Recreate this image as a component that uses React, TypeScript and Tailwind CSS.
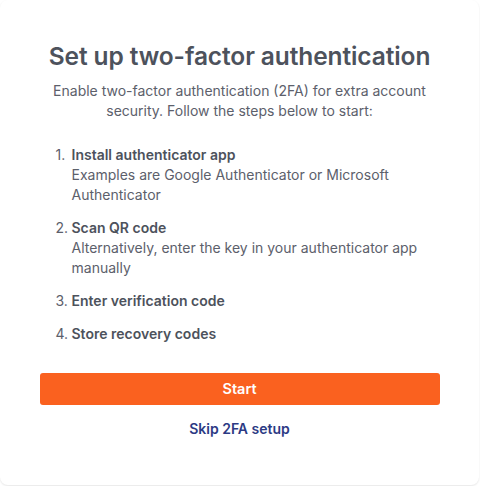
import React from "react";

const steps = [
  {
    title: "Install authenticator app",
    desc: "Examples are Google Authenticator or Microsoft Authenticator",
  },
  {
    title: "Scan QR code",
    desc: "Alternatively, enter the key in your authenticator app manually",
  },
  { title: "Enter verification code" },
  { title: "Store recovery codes" },
];

export default function App() {
  return (
    <div className="w-[480px] h-[486px] bg-white" style={{ fontFamily: "Inter, 'Noto Sans', sans-serif" }}>
      <div className="w-[479px] h-[485px] rounded-lg bg-white shadow-[0_1px_2px_rgba(0,0,0,0.1)] flex flex-col items-center pt-[39px]">
        <h1 className="text-[24.5px] leading-[34px] font-semibold text-[#4d525c] tracking-[-0.1px]">
          Set up two-factor authentication
        </h1>
        <p className="mt-[8px] w-[400px] text-center text-[14px] leading-[20px] text-[#5c606b]">
          Enable two-factor authentication (2FA) for extra account security. Follow the steps below to start:
        </p>
        <ol className="mt-[24px] w-[380px] ml-[12px] flex flex-col gap-[13px] text-[14px] leading-[20px] text-[#5c606b]">
          {steps.map((s, i) => (
            <li key={s.title} className="flex">
              <span className="w-[16px] shrink-0">{i + 1}.</span>
              <div>
                <div className="font-semibold text-[#4d525c]">{s.title}</div>
                {s.desc && <div>{s.desc}</div>}
              </div>
            </li>
          ))}
        </ol>
        <button className="mt-[29px] w-[400px] h-[32px] rounded-[3px] bg-[#fa611f] text-white text-[14.5px] font-semibold">
          Start
        </button>
        <button className="mt-[13px] text-[14px] font-semibold text-[#2c3a84]">Skip 2FA setup</button>
      </div>
    </div>
  );
}
